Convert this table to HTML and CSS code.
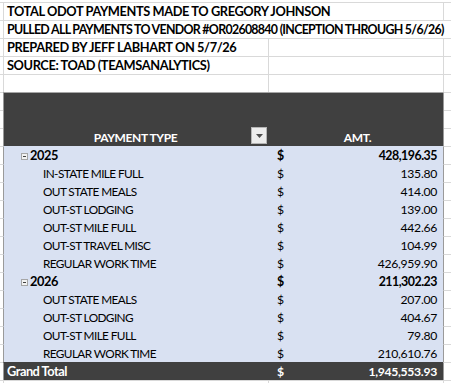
FILE: index.html
```html
<!DOCTYPE html>
<html>
<head>
<meta charset="utf-8">
<link rel="stylesheet" href="styles.css">
</head>
<body>
<div class="sheet">
  <div class="row"><div class="stub"></div><div class="cell title span2">TOTAL ODOT PAYMENTS MADE TO GREGORY JOHNSON</div><div class="stub end"></div></div>
  <div class="row"><div class="stub"></div><div class="cell title tight span3">PULLED ALL PAYMENTS TO VENDOR #OR02608840 (INCEPTION THROUGH 5/6/26)</div></div>
  <div class="row"><div class="stub"></div><div class="cell title">PREPARED BY JEFF LABHART ON 5/7/26</div><div class="cell"></div><div class="stub end"></div></div>
  <div class="row"><div class="stub"></div><div class="cell title">SOURCE: TOAD (TEAMSANALYTICS)</div><div class="cell"></div><div class="stub end"></div></div>
  <div class="row"><div class="stub"></div><div class="cell"></div><div class="cell"></div><div class="stub end"></div></div>

  <div class="row head"><div class="stub tall"></div>
    <div class="cell pv-head pv-left">PAYMENT TYPE
      <span class="filter"><svg width="7" height="4" viewBox="0 0 7 4"><path d="M0 0H7L3.5 4Z" fill="#4d4d4d"/></svg></span>
    </div>
    <div class="cell pv-head pv-right">AMT.</div><div class="stub end edge tall"></div></div>

  <div class="row"><div class="stub"></div><div class="cell pv pv-left year"><span class="toggle"></span>2025</div><div class="cell pv pv-right amt strong"><span>$</span><span>428,196.35</span></div><div class="stub end edge"></div></div>
  <div class="row"><div class="stub"></div><div class="cell pv pv-left item">IN-STATE MILE FULL</div><div class="cell pv pv-right amt"><span>$</span><span>135.80</span></div><div class="stub end edge"></div></div>
  <div class="row"><div class="stub"></div><div class="cell pv pv-left item">OUT STATE MEALS</div><div class="cell pv pv-right amt"><span>$</span><span>414.00</span></div><div class="stub end edge"></div></div>
  <div class="row"><div class="stub"></div><div class="cell pv pv-left item">OUT-ST LODGING</div><div class="cell pv pv-right amt"><span>$</span><span>139.00</span></div><div class="stub end edge"></div></div>
  <div class="row"><div class="stub"></div><div class="cell pv pv-left item">OUT-ST MILE FULL</div><div class="cell pv pv-right amt"><span>$</span><span>442.66</span></div><div class="stub end edge"></div></div>
  <div class="row"><div class="stub"></div><div class="cell pv pv-left item">OUT-ST TRAVEL MISC</div><div class="cell pv pv-right amt"><span>$</span><span>104.99</span></div><div class="stub end edge"></div></div>
  <div class="row"><div class="stub"></div><div class="cell pv pv-left item">REGULAR WORK TIME</div><div class="cell pv pv-right amt"><span>$</span><span>426,959.90</span></div><div class="stub end edge"></div></div>
  <div class="row"><div class="stub"></div><div class="cell pv pv-left year"><span class="toggle"></span>2026</div><div class="cell pv pv-right amt strong"><span>$</span><span>211,302.23</span></div><div class="stub end edge"></div></div>
  <div class="row"><div class="stub"></div><div class="cell pv pv-left item">OUT STATE MEALS</div><div class="cell pv pv-right amt"><span>$</span><span>207.00</span></div><div class="stub end edge"></div></div>
  <div class="row"><div class="stub"></div><div class="cell pv pv-left item">OUT-ST LODGING</div><div class="cell pv pv-right amt"><span>$</span><span>404.67</span></div><div class="stub end edge"></div></div>
  <div class="row"><div class="stub"></div><div class="cell pv pv-left item">OUT-ST MILE FULL</div><div class="cell pv pv-right amt"><span>$</span><span>79.80</span></div><div class="stub end edge"></div></div>
  <div class="row"><div class="stub"></div><div class="cell pv pv-left item">REGULAR WORK TIME</div><div class="cell pv pv-right amt"><span>$</span><span>210,610.76</span></div><div class="stub end edge"></div></div>
  <div class="row"><div class="stub"></div><div class="cell total pv-left">Grand Total</div><div class="cell total pv-right amt"><span>$</span><span>1,945,553.93</span></div><div class="stub end edge"></div></div>
  <div class="row"><div class="stub"></div><div class="cell"></div><div class="cell"></div><div class="stub end"></div></div>
</div>
</body>
</html>
```

FILE: styles.css
```css
* { box-sizing: border-box; }
body {
  margin: 0;
  background: #fff;
  font-family: Lato, "Liberation Sans", sans-serif;
  font-size: 12.8px;
  letter-spacing: -0.4px;
  color: #000;
}
.sheet { padding-top: 2px; }
.row {
  display: grid;
  grid-template-columns: 3px 265px 175px 1fr;
  height: 18px;
}
.row > div { border-top: 1px solid #d9d9d9; }
.cell {
  border-left: 1px solid #d9d9d9;
  padding: 0 4px 0 3px;
  line-height: 17px;
  white-space: nowrap;
}
.stub.end { border-left: 1px solid #d9d9d9; }
.span2 { grid-column: span 2; }
.span3 { grid-column: span 3; }
.title { font-weight: bold; }
.tight { font-size: 12.4px; letter-spacing: -0.7px; }

.head { height: 54px; }
.stub.tall {
  background: repeating-linear-gradient(to bottom, transparent 0 17px, #d9d9d9 17px 18px);
}
.pv-head {
  position: relative;
  background: #404040;
  color: #fff;
  font-weight: bold;
  font-size: 12px;
  display: flex;
  align-items: flex-end;
  justify-content: center;
  border-top-color: #a6a6a6 !important;
}
.pv-left { border-left: 1px solid #9a9a9a; }
.pv-right { border-left: 0; }
.pv-head.pv-right { padding-left: 8px; }
.stub.edge { border-left-color: #9a9a9a; }
.filter {
  position: absolute;
  right: 1px;
  bottom: 2px;
  width: 16px;
  height: 17px;
  background: #ececec;
  border: 1px solid #b4b4b4;
  display: flex;
  align-items: center;
  justify-content: center;
}
.filter svg { display: block; }

.row > .pv { background: #d9e1f2; border-top-color: #d9e1f2; }
.year { font-weight: bold; padding-left: 17px; }
.toggle {
  display: inline-block;
  position: relative;
  width: 7px;
  height: 7px;
  margin-right: 2px;
  border: 1px solid #a6a6a6;
  background: #f2f2f2;
  vertical-align: 0;
}
.toggle::after {
  content: "";
  position: absolute;
  left: 1px;
  right: 1px;
  top: 2px;
  height: 1px;
  background: #404040;
}
.item { padding-left: 39px; font-size: 11.8px; letter-spacing: -0.6px; }
.amt {
  display: flex;
  justify-content: space-between;
  padding: 0 6px 0 9px;
  font-size: 12.2px;
  letter-spacing: -0.3px;
}
.strong { font-weight: bold; font-size: 12.4px; letter-spacing: -0.5px; }
.row > .total {
  background: #404040;
  color: #fff;
  font-weight: bold;
  border-top-color: #404040;
}
.pv-left.total { padding-left: 3px; letter-spacing: -0.5px; }
```
